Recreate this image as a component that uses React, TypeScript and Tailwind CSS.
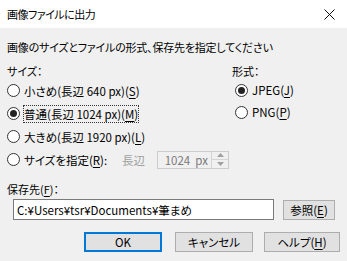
import React from 'react'

const font = { fontFamily: '"Noto Sans CJK JP", "Noto Sans", sans-serif' }

function Radio({ checked }: { checked?: boolean }) {
  return (
    <span className="flex h-[13px] w-[13px] shrink-0 items-center justify-center rounded-full border border-[#333] bg-white">
      {checked && <span className="h-[7px] w-[7px] rounded-full bg-[#222]" />}
    </span>
  )
}

function U({ children }: { children: React.ReactNode }) {
  return <span className="underline underline-offset-[2px]">{children}</span>
}

function Btn({ children, def, className }: { children: React.ReactNode; def?: boolean; className?: string }) {
  return (
    <div
      className={
        'flex h-[20px] items-center justify-center bg-[#e1e1e1] text-[#000] ' +
        (def ? 'border-2 border-[#0078d7] ' : 'border border-[#adadad] ') +
        (className ?? '')
      }
    >
      {children}
    </div>
  )
}

export default function App() {
  return (
    <div
      className="h-[261px] w-[347px] overflow-hidden bg-[#f0f0f0] text-[11.5px] leading-[16px] text-[#000] [font-feature-settings:'palt']"
      style={font}
    >
      {/* title bar */}
      <div className="flex h-[28px] items-center justify-between bg-white pl-[7px] pr-[12px]">
        <span className="text-[11px] tracking-[-0.5px]">画像ファイルに出力</span>
        <svg width="11" height="11" viewBox="0 0 11 11">
          <path d="M0.5 0.5 L10.5 10.5 M10.5 0.5 L0.5 10.5" stroke="#111" strokeWidth="1" />
        </svg>
      </div>

      <div className="px-[7px] pt-[11px]">
        <div className="h-[16px] text-[11px] tracking-[-0.2px]">画像のサイズとファイルの形式、保存先を指定してください</div>

        <div className="mt-[8px] flex">
          {/* size column */}
          <div className="w-[225px]">
            <div className="h-[16px] text-[11px]">サイズ：</div>
            <div className="flex h-[23px] items-center gap-[4px]">
              <Radio />
              <span>小さめ(長辺 640 px)(<U>S</U>)</span>
            </div>
            <div className="flex h-[23px] items-center gap-[4px]">
              <Radio checked />
              <span className="outline outline-1 outline-dotted outline-[#333]">普通(長辺 1024 px)(<U>M</U>)</span>
            </div>
            <div className="flex h-[23px] items-center gap-[4px]">
              <Radio />
              <span>大きめ(長辺 1920 px)(<U>L</U>)</span>
            </div>
            <div className="flex h-[23px] items-center">
              <Radio />
              <span className="ml-[4px] w-[98px]">サイズを指定(<U>R</U>):</span>
              <span className="w-[35px] text-[#a0a0a0]">長辺</span>
              <div className="flex h-[18px] w-[72px] items-stretch border border-[#cccccc] bg-[#f0f0f0]">
                <div className="flex flex-1 items-center justify-end pr-[3px] text-[#7a7a7a]">1024&nbsp; px</div>
                <div className="flex w-[17px] flex-col border-l border-[#d4d4d4]">
                  <div className="flex flex-1 items-center justify-center border-b border-[#d4d4d4]">
                    <svg width="7" height="4" viewBox="0 0 7 4"><path d="M3.5 0 L7 4 L0 4 Z" fill="#a0a0a0" /></svg>
                  </div>
                  <div className="flex flex-1 items-center justify-center">
                    <svg width="7" height="4" viewBox="0 0 7 4"><path d="M0 0 L7 0 L3.5 4 Z" fill="#a0a0a0" /></svg>
                  </div>
                </div>
              </div>
            </div>
          </div>

          {/* format column */}
          <div>
            <div className="h-[16px] text-[11px]">形式：</div>
            <div className="flex h-[22px] items-center gap-[4px] pl-[3px]">
              <Radio checked />
              <span>JPEG(<U>J</U>)</span>
            </div>
            <div className="flex h-[22px] items-center gap-[4px] pl-[3px]">
              <Radio />
              <span>PNG(<U>P</U>)</span>
            </div>
          </div>
        </div>

        <div className="mt-[10px] h-[16px] text-[11px]">保存先(<U>F</U>)：</div>

        <div className="mt-[2px] flex items-center">
          <div className="ml-[6px] flex h-[21px] w-[261px] items-center border border-[#7a7a7a] bg-white pl-[3px]">
            C:¥Users¥tsr¥Documents¥筆まめ
          </div>
          <Btn className="ml-[9px] w-[52px]">参照(<U>E</U>)</Btn>
        </div>

        <div className="mt-[12px] flex">
          <Btn def className="ml-[77px] w-[78px]">OK</Btn>
          <Btn className="ml-[13px] w-[78px]">キャンセル</Btn>
          <Btn className="ml-[11px] w-[76px]">ヘルプ(<U>H</U>)</Btn>
        </div>
      </div>
    </div>
  )
}
